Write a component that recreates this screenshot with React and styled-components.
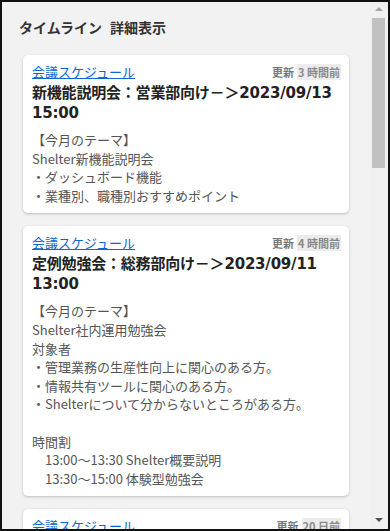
import React from 'react';
import styled, { createGlobalStyle } from 'styled-components';

const GlobalStyle = createGlobalStyle`
  html, body {
    margin: 0;
    padding: 0;
    background: #fff;
  }
  * {
    box-sizing: border-box;
  }
`;

const Frame = styled.div`
  width: 390px;
  height: 531px;
  border: 2px solid #111;
  background-color: #f2f2f2;
  display: flex;
  overflow: hidden;
  font-family: "Noto Sans CJK JP", "Noto Sans", sans-serif;
`;

const Content = styled.div`
  flex: 1;
  min-width: 0;
  padding: 15px 16px 0 16px;
  overflow: hidden;
`;

const Heading = styled.h1`
  margin: 0 0 18px 1px;
  font-size: 14px;
  line-height: 20px;
  font-weight: 700;
  color: #333;
  > span + span {
    margin-left: 8px;
  }
`;

const CardList = styled.div`
  display: flex;
  flex-direction: column;
  gap: 13px;
  padding: 0 5px;
`;

const Card = styled.div`
  background-color: #fff;
  border-radius: 5px;
  box-shadow: 0 1px 3px rgba(0, 0, 0, 0.22);
  padding: 8px 8px 8px 9px;
`;

const CardHeader = styled.div`
  display: flex;
  align-items: center;
  justify-content: space-between;
  height: 18px;
`;

const CategoryLink = styled.a`
  font-size: 13px;
  line-height: 18px;
  color: #0b66d6;
  text-decoration: underline;
  cursor: pointer;
`;

const Updated = styled.div`
  font-size: 11px;
  font-weight: 700;
  color: #777;
  line-height: 14px;
  > span {
    margin-left: 3px;
    padding: 0 1px;
    background-color: #ececec;
    color: #8a8a8a;
  }
`;

const Title = styled.div`
  margin-top: 2px;
  font-family: "DejaVu Sans", "Noto Sans CJK JP", sans-serif;
  font-size: 15px;
  line-height: 20px;
  font-weight: 700;
  color: #222;
  letter-spacing: -0.2px;
`;

const Body = styled.div`
  margin-top: 8px;
  font-size: 13px;
  line-height: 18.6px;
  color: #555;
  white-space: pre-wrap;
`;

const Scrollbar = styled.div`
  width: 18px;
  flex-shrink: 0;
  display: flex;
  flex-direction: column;
  align-items: center;
  background-color: #f0f0f0;
  padding-top: 5px;
`;

const Arrow = styled.div`
  width: 0;
  height: 0;
  border-left: 4px solid transparent;
  border-right: 4px solid transparent;
  ${({ down }) => down
    ? 'border-top: 4px solid #505050; margin-top: auto; margin-bottom: 7px;'
    : 'border-bottom: 4px solid #a3a3a3;'}
`;

const Thumb = styled.div`
  width: 13px;
  height: 150px;
  margin-top: 7px;
  margin-right: 1px;
  background-color: #c1c1c1;
`;

const items = [
  {
    id: 1,
    updated: '3 時間前',
    title: '新機能説明会：営業部向け－＞2023/09/13 15:00',
    body: '【今月のテーマ】\nShelter新機能説明会\n・ダッシュボード機能\n・業種別、職種別おすすめポイント',
  },
  {
    id: 2,
    updated: '4 時間前',
    title: '定例勉強会：総務部向け－＞2023/09/11 13:00',
    body: '【今月のテーマ】\nShelter社内運用勉強会\n対象者\n・管理業務の生産性向上に関心のある方。\n・情報共有ツールに関心のある方。\n・Shelterについて分からないところがある方。\n\n時間割\n　13:00～13:30 Shelter概要説明\n　13:30～15:00 体験型勉強会',
  },
  {
    id: 3,
    updated: '20 日前',
    title: '定例勉強会：営業部向け－＞2023/08/24 15:00',
    body: '【今月のテーマ】\nShelter活用事例の紹介',
  },
];

const TimelineCard = ({ updated, title, body }) => (
  <Card>
    <CardHeader>
      <CategoryLink>会議スケジュール</CategoryLink>
      <Updated>更新<span>{updated}</span></Updated>
    </CardHeader>
    <Title>{title}</Title>
    <Body>{body}</Body>
  </Card>
);

const App = () => (
  <>
    <GlobalStyle />
    <Frame>
      <Content>
        <Heading><span>タイムライン</span><span>詳細表示</span></Heading>
        <CardList>
          {items.map(item => <TimelineCard key={item.id} {...item} />)}
        </CardList>
      </Content>
      <Scrollbar>
        <Arrow />
        <Thumb />
        <Arrow down />
      </Scrollbar>
    </Frame>
  </>
);

export default App;
